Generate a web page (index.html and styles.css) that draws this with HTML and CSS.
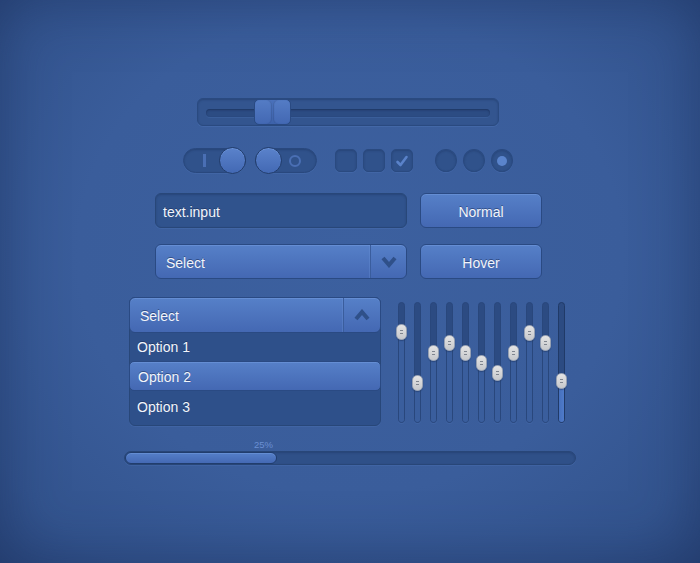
FILE: index.html
```html
<!DOCTYPE html>
<html>
<head>
<meta charset="utf-8">
<link rel="stylesheet" href="styles.css">
</head>
<body>
<div class="stage">
  <div class="row-slider">
    <div class="hslider">
      <div class="groove"></div>
      <div class="hthumb"><span class="half"></span><span class="half"></span></div>
    </div>
  </div>

  <div class="row-toggles">
    <div class="toggle on"><span class="bar"></span><span class="knob"></span></div>
    <div class="toggle off"><span class="knob"></span><span class="ring"></span></div>
    <div class="checks">
      <span class="check"></span>
      <span class="check"></span>
      <span class="check checked">
        <svg width="16" height="16" viewBox="0 0 16 16"><path d="M3.5 9 L6.5 12 L12.5 4" fill="none" stroke="#5a82c9" stroke-width="2.6" stroke-linecap="round" stroke-linejoin="round"/></svg>
      </span>
    </div>
    <div class="radios">
      <span class="radio"></span>
      <span class="radio"></span>
      <span class="radio selected"><span class="dot"></span></span>
    </div>
  </div>

  <div class="row-form">
    <div class="text-input">text.input</div>
    <div class="btn">Normal</div>
  </div>

  <div class="row-form second">
    <div class="select">
      <span class="select-label">Select</span>
      <span class="select-arrow">
        <svg width="16" height="12" viewBox="0 0 16 12"><path d="M2 2 L8 9 L14 2" fill="none" stroke="#2f5089" stroke-width="4" stroke-linejoin="miter"/></svg>
      </span>
    </div>
    <div class="btn hover">Hover</div>
  </div>

  <div class="row-lower">
    <div class="dropdown">
      <div class="dd-head">
        <span class="dd-label">Select</span>
        <span class="dd-arrow">
          <svg width="16" height="12" viewBox="0 0 16 12"><path d="M2 10 L8 3 L14 10" fill="none" stroke="#2f5089" stroke-width="4" stroke-linejoin="miter"/></svg>
        </span>
      </div>
      <div class="dd-option first">Option 1</div>
      <div class="dd-option active">Option 2</div>
      <div class="dd-option last">Option 3</div>
    </div>

    <div class="eq">
      <div class="vtrack"><span class="vfill" style="top:29px"></span><span class="vthumb" style="top:21px"></span></div>
      <div class="vtrack"><span class="vfill" style="top:80px"></span><span class="vthumb" style="top:72px"></span></div>
      <div class="vtrack"><span class="vfill" style="top:50px"></span><span class="vthumb" style="top:42px"></span></div>
      <div class="vtrack"><span class="vfill" style="top:40px"></span><span class="vthumb" style="top:32px"></span></div>
      <div class="vtrack"><span class="vfill" style="top:50px"></span><span class="vthumb" style="top:42px"></span></div>
      <div class="vtrack"><span class="vfill" style="top:60px"></span><span class="vthumb" style="top:52px"></span></div>
      <div class="vtrack"><span class="vfill" style="top:70px"></span><span class="vthumb" style="top:62px"></span></div>
      <div class="vtrack"><span class="vfill" style="top:50px"></span><span class="vthumb" style="top:42px"></span></div>
      <div class="vtrack"><span class="vfill" style="top:30px"></span><span class="vthumb" style="top:22px"></span></div>
      <div class="vtrack"><span class="vfill" style="top:40px"></span><span class="vthumb" style="top:32px"></span></div>
      <div class="vtrack bright"><span class="vfill" style="top:78px"></span><span class="vthumb" style="top:70px"></span></div>
    </div>
  </div>

  <div class="row-progress">
    <div class="progress-label" style="width:152px">25%</div>
    <div class="progress"><div class="progress-fill" style="width:152px"></div></div>
  </div>
</div>
</body>
</html>
```

FILE: styles.css
```css
html, body {
  margin: 0;
  padding: 0;
}
body {
  width: 700px;
  height: 563px;
  overflow: hidden;
  font-family: "Liberation Sans", Arial, sans-serif;
}
.stage {
  width: 700px;
  height: 563px;
  box-sizing: border-box;
  padding-top: 98px;
  background: radial-gradient(ellipse at 50% 45%, #3c609f 0%, #3a5d9b 55%, #33548e 85%, #2d4b82 100%);
  box-shadow: inset 0 0 60px rgba(25, 45, 90, 0.55);
  display: flex;
  flex-direction: column;
}

/* horizontal slider */
.row-slider {
  margin-left: 197px;
}
.hslider {
  position: relative;
  width: 302px;
  height: 28px;
  box-sizing: border-box;
  border: 1px solid #2a4a80;
  border-radius: 6px;
  background: #33558f;
  box-shadow: inset 0 1px 2px rgba(20, 40, 80, 0.35), 0 1px 0 rgba(90, 130, 200, 0.25);
  padding: 10px 8px 0 8px;
}
.groove {
  height: 8px;
  border-radius: 4px;
  background: #2c4c83;
  box-shadow: inset 0 1px 2px rgba(15, 30, 65, 0.5), 0 1px 0 rgba(90, 130, 200, 0.2);
}
.hthumb {
  position: absolute;
  left: 56px;
  top: 0;
  width: 37px;
  height: 26px;
  box-sizing: border-box;
  border: 1px solid #2a4a82;
  border-radius: 5px;
  background: linear-gradient(#4a71bb, #3d62aa);
  display: flex;
  gap: 1px;
}
.hthumb .half {
  flex: 1;
  border-radius: 5px;
  background: linear-gradient(#547cc5, #4368b3);
}
.hthumb .half:first-child {
  box-shadow: inset -1px 0 1px rgba(30, 55, 105, 0.3);
}
.hthumb .half + .half {
  box-shadow: inset 1px 0 1px rgba(30, 55, 105, 0.3);
}

/* toggles row */
.row-toggles {
  margin-top: 22px;
  margin-left: 183px;
  display: flex;
  align-items: center;
  height: 25px;
}
.toggle {
  height: 25px;
  box-sizing: border-box;
  border: 1px solid #29487e;
  border-radius: 13px;
  background: #30528b;
  box-shadow: inset 0 1px 2px rgba(20, 40, 80, 0.35), 0 1px 0 rgba(90, 130, 200, 0.2);
  display: flex;
  align-items: center;
}
.toggle.on {
  width: 63px;
}
.toggle.off {
  width: 62px;
  margin-left: 9px;
}
.knob {
  width: 27px;
  height: 27px;
  box-sizing: border-box;
  border-radius: 50%;
  border: 1px solid #223d6c;
  background: linear-gradient(#5a82cb, #4369b4);
  box-shadow: inset 0 1px 0 rgba(130, 170, 235, 0.4);
}
.toggle.on .bar {
  width: 3px;
  height: 13px;
  background: #4a6fb4;
  margin-left: 19px;
}
.toggle.on .knob {
  margin-left: auto;
  margin-right: -1px;
}
.toggle.off .knob {
  margin-left: -1px;
}
.toggle.off .ring {
  width: 12px;
  height: 12px;
  box-sizing: border-box;
  border: 2px solid #4a6fb4;
  border-radius: 50%;
  margin-left: 7px;
}
.checks {
  display: flex;
  gap: 6px;
  margin-left: 18px;
}
.check {
  width: 22px;
  height: 23px;
  box-sizing: border-box;
  border: 1px solid #2a4a80;
  border-radius: 5px;
  background: #30528b;
  box-shadow: inset 0 1px 2px rgba(20, 40, 80, 0.3), 0 1px 0 rgba(90, 130, 200, 0.2);
  display: flex;
  align-items: center;
  justify-content: center;
}
.radios {
  display: flex;
  gap: 6px;
  margin-left: 22px;
}
.radio {
  width: 22px;
  height: 23px;
  box-sizing: border-box;
  border: 1px solid #2a4a80;
  border-radius: 50%;
  background: #30528b;
  box-shadow: inset 0 1px 2px rgba(20, 40, 80, 0.3), 0 1px 0 rgba(90, 130, 200, 0.2);
  display: flex;
  align-items: center;
  justify-content: center;
}
.dot {
  width: 10px;
  height: 10px;
  border-radius: 50%;
  background: #5a84cc;
}

/* form rows */
.row-form {
  margin-top: 20px;
  margin-left: 155px;
  display: flex;
  gap: 13px;
  height: 35px;
}
.row-form.second {
  margin-top: 16px;
}
.text-input {
  width: 252px;
  height: 35px;
  box-sizing: border-box;
  border: 1px solid #284779;
  border-radius: 6px;
  background: #30538d;
  box-shadow: inset 0 1px 2px rgba(20, 40, 80, 0.3), 0 1px 0 rgba(90, 130, 200, 0.2);
  color: #f2f5fb;
  font-size: 14px;
  line-height: 30px;
  padding: 3px 0 0 7px;
  text-shadow: 0 -1px 0 rgba(20, 40, 80, 0.5);
}
.btn {
  width: 122px;
  height: 35px;
  box-sizing: border-box;
  border: 1px solid #2a4a83;
  border-radius: 6px;
  background: linear-gradient(#5680c8, #4468b3);
  box-shadow: inset 0 1px 0 rgba(130, 170, 235, 0.35);
  color: #f2f5fb;
  font-size: 14px;
  line-height: 30px;
  padding-top: 3px;
  text-align: center;
  text-shadow: 0 -1px 0 rgba(20, 40, 80, 0.5);
}
.select {
  width: 252px;
  height: 35px;
  box-sizing: border-box;
  border: 1px solid #2a4a83;
  border-radius: 6px;
  background: linear-gradient(#5680c8, #4468b3);
  box-shadow: inset 0 1px 0 rgba(130, 170, 235, 0.35);
  display: flex;
}
.select-label {
  flex: 1;
  color: #f2f5fb;
  font-size: 14px;
  line-height: 30px;
  padding: 3px 0 0 10px;
  text-shadow: 0 -1px 0 rgba(20, 40, 80, 0.5);
}
.select-arrow {
  width: 35px;
  border-left: 1px solid #3a5d9d;
  box-shadow: -1px 0 0 rgba(110, 150, 220, 0.3);
  display: flex;
  align-items: center;
  justify-content: center;
}

/* dropdown + eq */
.row-lower {
  margin-top: 18px;
  margin-left: 129px;
  display: flex;
  align-items: flex-start;
}
.dropdown {
  width: 252px;
  height: 129px;
  box-sizing: border-box;
  border: 1px solid #284779;
  border-radius: 6px;
  background: #2e508a;
  box-shadow: 0 1px 0 rgba(90, 130, 200, 0.2);
  display: flex;
  flex-direction: column;
}
.dd-head {
  height: 36px;
  margin: -1px -1px 0 -1px;
  box-sizing: border-box;
  border: 1px solid #2a4a83;
  border-radius: 6px;
  background: linear-gradient(#5680c8, #4468b3);
  box-shadow: inset 0 1px 0 rgba(130, 170, 235, 0.35);
  display: flex;
}
.dd-label {
  flex: 1;
  color: #f2f5fb;
  font-size: 14px;
  line-height: 34px;
  padding: 1px 0 0 10px;
  text-shadow: 0 -1px 0 rgba(20, 40, 80, 0.5);
}
.dd-arrow {
  width: 36px;
  border-left: 1px solid #3a5d9d;
  box-shadow: -1px 0 0 rgba(110, 150, 220, 0.3);
  display: flex;
  align-items: center;
  justify-content: center;
}
.dd-option {
  color: #f2f5fb;
  font-size: 14px;
  padding-left: 7px;
  text-shadow: 0 -1px 0 rgba(20, 40, 80, 0.5);
}
.dd-option.first {
  height: 28px;
  line-height: 28px;
}
.dd-option.active {
  height: 30px;
  margin: 0 -1px;
  box-sizing: border-box;
  border: 1px solid #2a4a83;
  border-radius: 5px;
  padding: 1px 0 0 8px;
  line-height: 28px;
  background: linear-gradient(#5680c8, #4468b3);
  box-shadow: inset 0 1px 0 rgba(130, 170, 235, 0.35);
}
.dd-option.last {
  height: 30px;
  line-height: 32px;
}

.eq {
  margin-left: 17px;
  margin-top: 5px;
  display: flex;
  gap: 9px;
}
.vtrack {
  position: relative;
  width: 7px;
  height: 121px;
  box-sizing: border-box;
  border: 1px solid #29477c;
  border-radius: 4px;
  background: #2c4b82;
  box-shadow: 0 1px 0 rgba(90, 130, 200, 0.2);
}
.vfill {
  position: absolute;
  left: 0;
  right: 0;
  bottom: 0;
  border-radius: 0 0 3px 3px;
  background: #3a5e9d;
}
.vtrack.bright {
  border-color: #203a68;
}
.vtrack.bright .vfill {
  background: linear-gradient(90deg, #4670bd, #4f7bc9);
}
.vthumb {
  position: absolute;
  left: -3px;
  width: 11px;
  height: 16px;
  box-sizing: border-box;
  border-radius: 5px;
  border: 1px solid #97a1b3;
  background: linear-gradient(#e4e4e4, #c6c8cc);
  box-shadow: 0 1px 1px rgba(20, 40, 80, 0.4);
}
.vthumb::before,
.vthumb::after {
  content: "";
  position: absolute;
  left: 3px;
  width: 3px;
  height: 1px;
  background: #7f858f;
}
.vthumb::before {
  top: 5px;
}
.vthumb::after {
  top: 8px;
}

/* progress */
.row-progress {
  margin-top: 13px;
  margin-left: 124px;
  width: 452px;
}
.progress-label {
  height: 11px;
  font-size: 9.5px;
  line-height: 11px;
  color: #6a8fd3;
  margin-bottom: 1px;
  display: flex;
  justify-content: flex-end;
  transform: translateX(-3px);
}
.progress {
  height: 14px;
  box-sizing: border-box;
  border: 1px solid #284678;
  border-radius: 7px;
  background: #2f5088;
  box-shadow: inset 0 1px 2px rgba(20, 40, 80, 0.3), 0 1px 0 rgba(90, 130, 200, 0.2);
  overflow: hidden;
}
.progress-fill {
  height: 12px;
  box-sizing: border-box;
  border: 1px solid #213d6d;
  border-radius: 6px;
  background: linear-gradient(#557fc8, #4469b4);
  box-shadow: inset 0 1px 0 rgba(130, 170, 235, 0.35);
}
```
